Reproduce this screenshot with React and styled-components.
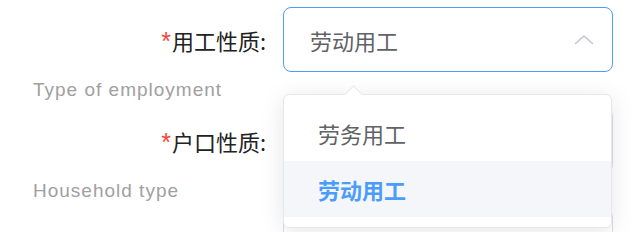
import React from "react";
import styled, { createGlobalStyle } from "styled-components";

const Global = createGlobalStyle`
  html, body { margin: 0; padding: 0; background: #fff; }
  body { width: 640px; height: 232px; overflow: hidden; font-family: "Noto Sans CJK SC", sans-serif; }
`;

const Form = styled.div`
  padding-top: 7px;
  display: flex;
  flex-direction: column;
`;

const Item = styled.div`
  display: flex;
  flex-direction: column;
`;

const Row = styled.div`
  display: flex;
  align-items: center;
  height: 65px;
`;

const Label = styled.div`
  width: 266px;
  padding-right: 17px;
  box-sizing: content-box;
  text-align: right;
  font-size: 22px;
  color: #222;
  white-space: nowrap;
`;

const Star = styled.span`
  color: #f5453b;
  font-family: "Liberation Sans", Arial, sans-serif;
  font-size: 25px;
  margin-right: 1px;
`;

const SelectWrap = styled.div`
  position: relative;
  width: 330px;
  height: 65px;
`;

const Input = styled.div`
  box-sizing: border-box;
  height: 100%;
  border: 1.5px solid ${(p) => (p.$focus ? "#4c9dfa" : "#dcdfe6")};
  border-radius: 8px;
  display: flex;
  align-items: center;
  justify-content: space-between;
  padding: 0 18px 0 26px;
  font-size: 22px;
  color: #606266;
`;

const Hint = styled.div`
  height: 36px;
  line-height: 36px;
  padding-left: 33px;
  font-family: "Liberation Sans", Arial, sans-serif;
  font-size: 19px;
  letter-spacing: 1px;
  color: #a0a0a0;
`;

const Dropdown = styled.div`
  position: absolute;
  left: 0;
  top: 87px;
  width: 329px;
  box-sizing: border-box;
  background: #fff;
  border: 1px solid #e4e7ed;
  border-radius: 6px;
  box-shadow: 0 4px 24px rgba(0, 0, 0, 0.1);
  padding: 10px 0;
  z-index: 10;
`;

const Arrow = styled.div`
  position: absolute;
  top: -7px;
  left: 63px;
  width: 12px;
  height: 12px;
  background: #fff;
  border-top: 1px solid #e4e7ed;
  border-left: 1px solid #e4e7ed;
  transform: rotate(45deg);
`;

const Option = styled.div`
  height: 56px;
  display: flex;
  align-items: center;
  padding-left: 34px;
  font-size: 22px;
  color: ${(p) => (p.$selected ? "#4c9dfa" : "#606266")};
  font-weight: ${(p) => (p.$selected ? 700 : 400)};
  background: ${(p) => (p.$hover ? "#f4f6fa" : "#fff")};
`;

const Chevron = () => (
  <svg width="20" height="12" viewBox="0 0 20 12">
    <polyline points="1,10 10,2 19,10" fill="none" stroke="#c0c4cc" strokeWidth="1.5" />
  </svg>
);

export default function App() {
  return (
    <>
      <Global />
      <Form>
        <Item>
          <Row>
            <Label><Star>*</Star>用工性质:</Label>
            <SelectWrap>
              <Input $focus>
                <span>劳动用工</span>
                <Chevron />
              </Input>
              <Dropdown>
                <Arrow />
                <Option>劳务用工</Option>
                <Option $selected $hover>劳动用工</Option>
              </Dropdown>
            </SelectWrap>
          </Row>
          <Hint>Type of employment</Hint>
        </Item>
        <Item>
          <Row>
            <Label><Star>*</Star>户口性质:</Label>
            <SelectWrap>
              <Input>
                <span />
                <Chevron />
              </Input>
            </SelectWrap>
          </Row>
          <Hint>Household type</Hint>
        </Item>
        <Item>
          <Row>
            <Label><Star>*</Star>参保类型:</Label>
            <SelectWrap>
              <Input>
                <span>缴纳</span>
                <Chevron />
              </Input>
            </SelectWrap>
          </Row>
        </Item>
      </Form>
    </>
  );
}
